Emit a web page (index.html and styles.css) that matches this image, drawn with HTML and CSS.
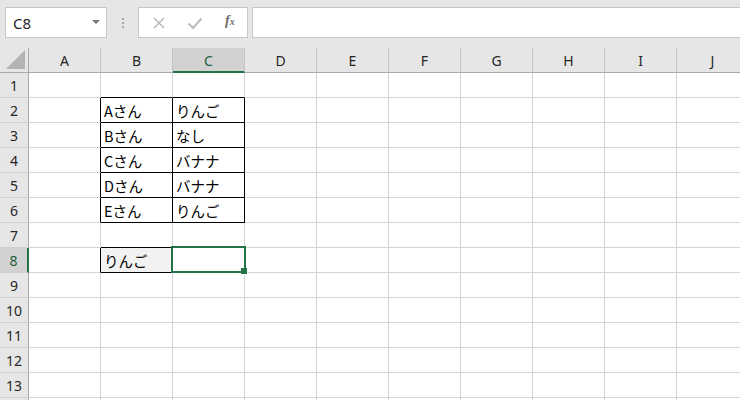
FILE: index.html
```html
<!DOCTYPE html>
<html lang="ja">
<head>
<meta charset="utf-8">
<link rel="stylesheet" href="styles.css">
</head>
<body>
<div class="app">
  <div class="topbar">
    <div class="namebox"><span class="ref">C8</span><span class="dd"></span></div>
    <div class="dots"><i></i><i></i><i></i></div>
    <div class="fbtns">
      <svg class="ico" width="14" height="14" viewBox="0 0 14 14"><path d="M2 2 L12 12 M12 2 L2 12" stroke="#b3b3b3" stroke-width="1.4" fill="none"/></svg>
      <svg class="ico" width="16" height="14" viewBox="0 0 16 14"><path d="M1.5 7.5 L6 12 L14.5 2.5" stroke="#bdbdbd" stroke-width="2.2" fill="none"/></svg>
      <span class="fx">f<small>x</small></span>
    </div>
    <div class="finput"></div>
  </div>
  <div class="sheet">
    <div class="corner"><span class="tri"></span></div>
    <div class="ch">A</div><div class="ch">B</div><div class="ch selh">C</div><div class="ch">D</div><div class="ch">E</div><div class="ch">F</div><div class="ch">G</div><div class="ch">H</div><div class="ch">I</div><div class="ch">J</div>

    <div class="rh">1</div>
    <div class="c"></div><div class="c bk"></div><div class="c bk"></div><div class="c"></div><div class="c"></div><div class="c"></div><div class="c"></div><div class="c"></div><div class="c"></div><div class="c"></div>

    <div class="rh">2</div>
    <div class="c rk"></div><div class="c rk bk">Aさん</div><div class="c rk bk">りんご</div><div class="c"></div><div class="c"></div><div class="c"></div><div class="c"></div><div class="c"></div><div class="c"></div><div class="c"></div>

    <div class="rh">3</div>
    <div class="c rk"></div><div class="c rk bk">Bさん</div><div class="c rk bk">なし</div><div class="c"></div><div class="c"></div><div class="c"></div><div class="c"></div><div class="c"></div><div class="c"></div><div class="c"></div>

    <div class="rh">4</div>
    <div class="c rk"></div><div class="c rk bk">Cさん</div><div class="c rk bk">バナナ</div><div class="c"></div><div class="c"></div><div class="c"></div><div class="c"></div><div class="c"></div><div class="c"></div><div class="c"></div>

    <div class="rh">5</div>
    <div class="c rk"></div><div class="c rk bk">Dさん</div><div class="c rk bk">バナナ</div><div class="c"></div><div class="c"></div><div class="c"></div><div class="c"></div><div class="c"></div><div class="c"></div><div class="c"></div>

    <div class="rh">6</div>
    <div class="c rk"></div><div class="c rk bk">Eさん</div><div class="c rk bk">りんご</div><div class="c"></div><div class="c"></div><div class="c"></div><div class="c"></div><div class="c"></div><div class="c"></div><div class="c"></div>

    <div class="rh">7</div>
    <div class="c"></div><div class="c bk"></div><div class="c"></div><div class="c"></div><div class="c"></div><div class="c"></div><div class="c"></div><div class="c"></div><div class="c"></div><div class="c"></div>

    <div class="rh selr">8</div>
    <div class="c rk"></div><div class="c rk bk fill">りんご</div><div class="c active"><span class="selbox"><span class="handle"></span></span></div><div class="c"></div><div class="c"></div><div class="c"></div><div class="c"></div><div class="c"></div><div class="c"></div><div class="c"></div>

    <div class="rh">9</div>
    <div class="c"></div><div class="c"></div><div class="c"></div><div class="c"></div><div class="c"></div><div class="c"></div><div class="c"></div><div class="c"></div><div class="c"></div><div class="c"></div>

    <div class="rh">10</div>
    <div class="c"></div><div class="c"></div><div class="c"></div><div class="c"></div><div class="c"></div><div class="c"></div><div class="c"></div><div class="c"></div><div class="c"></div><div class="c"></div>

    <div class="rh">11</div>
    <div class="c"></div><div class="c"></div><div class="c"></div><div class="c"></div><div class="c"></div><div class="c"></div><div class="c"></div><div class="c"></div><div class="c"></div><div class="c"></div>

    <div class="rh">12</div>
    <div class="c"></div><div class="c"></div><div class="c"></div><div class="c"></div><div class="c"></div><div class="c"></div><div class="c"></div><div class="c"></div><div class="c"></div><div class="c"></div>

    <div class="rh">13</div>
    <div class="c"></div><div class="c"></div><div class="c"></div><div class="c"></div><div class="c"></div><div class="c"></div><div class="c"></div><div class="c"></div><div class="c"></div><div class="c"></div>

    <div class="rh"></div>
    <div class="c"></div><div class="c"></div><div class="c"></div><div class="c"></div><div class="c"></div><div class="c"></div><div class="c"></div><div class="c"></div><div class="c"></div><div class="c"></div>
  </div>
</div>
</body>
</html>
```

FILE: styles.css
```css
* { box-sizing: border-box; }
html, body { margin: 0; padding: 0; }
body {
  width: 740px;
  height: 400px;
  overflow: hidden;
  background: #ffffff;
  font-family: "Noto Sans", "Noto Sans CJK JP", sans-serif;
  color: #222;
}
.app { width: 740px; height: 400px; overflow: hidden; }

.topbar {
  height: 48px;
  background: #e6e6e6;
  display: flex;
  align-items: flex-start;
  padding: 7px 0 0 5px;
}
.namebox {
  width: 102px;
  height: 31px;
  background: #ffffff;
  border: 1px solid #c6c6c6;
  display: flex;
  align-items: center;
  justify-content: space-between;
  padding: 0 6px 0 7px;
}
.ref {
  font-family: "Noto Sans", sans-serif;
  font-size: 15px;
  color: #262626;
  padding-top: 1px;
}
.dd {
  width: 0;
  height: 0;
  border-left: 4px solid transparent;
  border-right: 4px solid transparent;
  border-top: 4px solid #777;
  margin-top: -2px;
}
.dots {
  width: 31px;
  height: 31px;
  display: flex;
  flex-direction: column;
  align-items: center;
  justify-content: center;
  gap: 2px;
}
.dots i {
  display: block;
  width: 2px;
  height: 2px;
  background: #a6a6a6;
}
.fbtns {
  width: 110px;
  height: 31px;
  background: #ffffff;
  border: 1px solid #c6c6c6;
  display: flex;
  align-items: center;
  padding-left: 13px;
}
.fbtns .ico { display: block; }
.fbtns .ico + .ico { margin-left: 21px; }
.fx {
  margin-left: 22px;
  font-family: "Liberation Serif", serif;
  font-style: italic;
  font-weight: bold;
  font-size: 14px;
  color: #6b6b6b;
  margin-top: -3px;
}
.fx small { font-size: 10px; }
.finput {
  margin-left: 4px;
  flex: 1;
  height: 31px;
  margin-right: -10px;
  background: #ffffff;
  border: 1px solid #c6c6c6;
}

.sheet {
  display: grid;
  grid-template-columns: 29px repeat(10, 72px);
  grid-auto-rows: 25px;
}
.corner {
  background: #e6e6e6;
  border-right: 1px solid #a9a9a9;
  border-bottom: 1px solid #a9a9a9;
  position: relative;
}
.tri {
  position: absolute;
  right: 3px;
  bottom: 3px;
  width: 0;
  height: 0;
  border-left: 19px solid transparent;
  border-bottom: 19px solid #b4b4b4;
}
.ch {
  background: #e6e6e6;
  border-right: 1px solid #c4c4c4;
  border-bottom: 1px solid #a9a9a9;
  display: flex;
  align-items: center;
  justify-content: center;
  font-size: 14px;
  color: #262626;
  padding-top: 1px;
}
.ch.selh {
  background: #d2d2d2;
  border-bottom: 2px solid #217346;
  color: #1e5e3e;
  padding-top: 2px;
}
.rh {
  background: #e6e6e6;
  border-right: 1px solid #a9a9a9;
  border-bottom: 1px solid #d0d0d0;
  display: flex;
  align-items: center;
  justify-content: center;
  font-size: 14px;
  color: #262626;
}
.rh.selr {
  background: #d2d2d2;
  color: #1e5e3e;
  border-right: 2px solid #217346;
}
.c {
  border-right: 1px solid #d4d4d4;
  border-bottom: 1px solid #d4d4d4;
  font-family: "Noto Sans CJK JP", "Noto Sans", sans-serif;
  font-size: 14.5px;
  color: #000;
  display: flex;
  align-items: center;
  padding: 1px 0 0 3px;
  white-space: nowrap;
}
.c.rk { border-right-color: #000; }
.c.bk { border-bottom-color: #000; }
.c.fill { background: #f2f2f2; }
.c.active { position: relative; }
.selbox {
  position: absolute;
  left: -2px;
  top: -2px;
  width: 75px;
  height: 27px;
  border: 2px solid #217346;
}
.handle {
  position: absolute;
  right: -4px;
  bottom: -4px;
  width: 7px;
  height: 7px;
  background: #217346;
  border: 1px solid #ffffff;
  border-top: none;
  border-left: none;
}
```
